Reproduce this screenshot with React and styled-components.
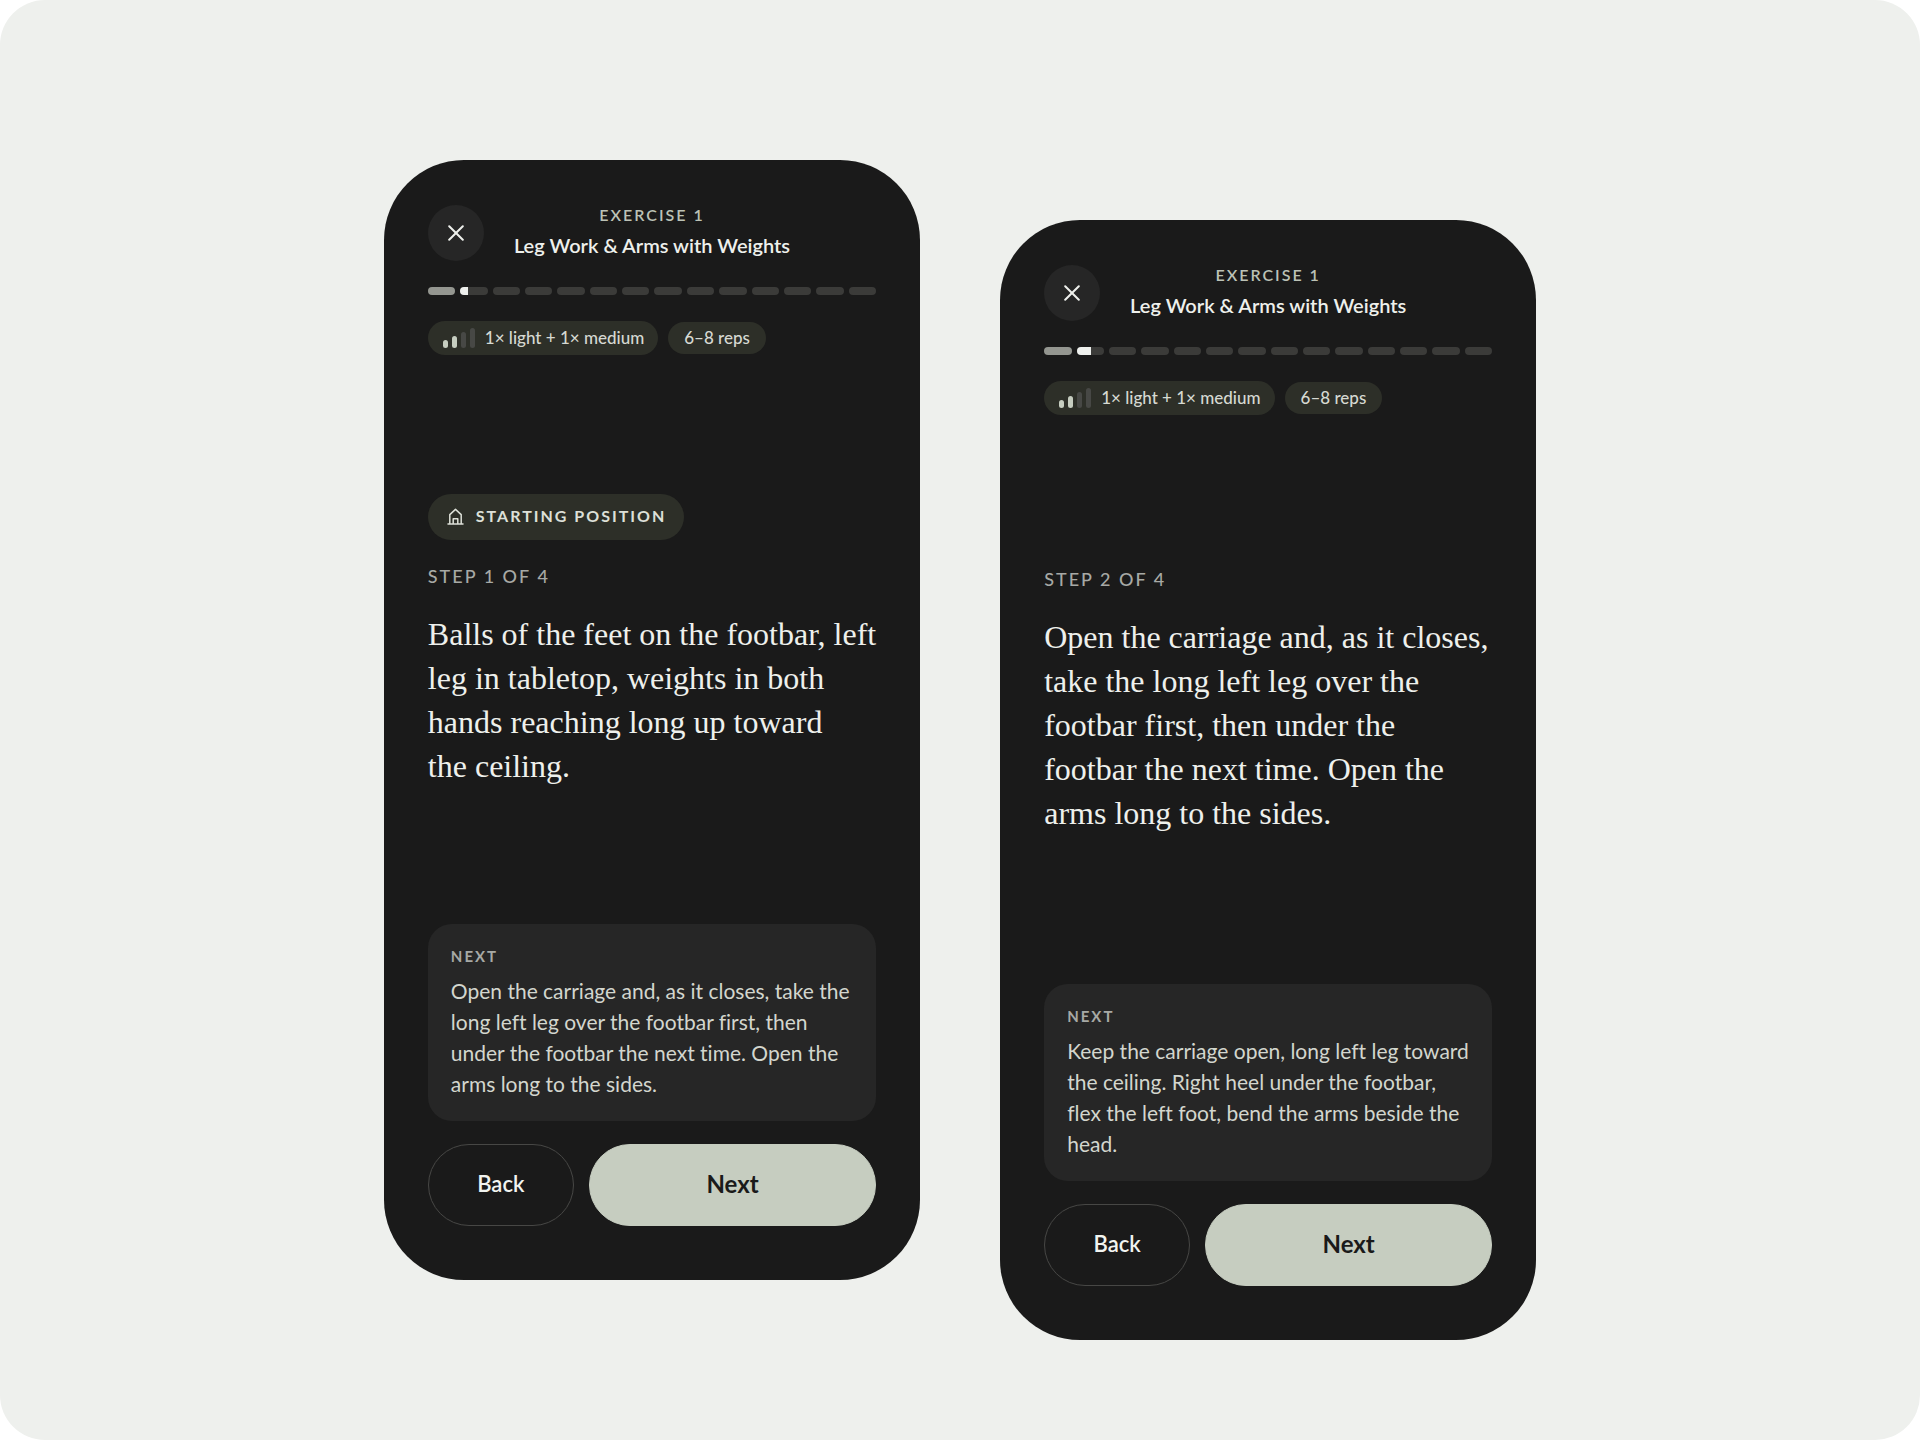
import styled, { createGlobalStyle } from 'styled-components';

const GlobalStyle = createGlobalStyle`
  *,
  *::before,
  *::after {
    box-sizing: border-box;
  }

  body {
    margin: 0;
    background: #ffffff;
    color: #eef0ec;
    font-family: Lato, 'Open Sans', sans-serif;
    font-variant-ligatures: none;
  }

  button {
    font-family: inherit;
    cursor: pointer;
  }
`;

const Stage = styled.main`
  display: flex;
  justify-content: center;
  align-items: flex-start;
  gap: 80px;
  min-height: 100vh;
  padding: 160px 48px 100px;
  border-radius: 45px;
  background: #eef0ed;
`;

const Phone = styled.section`
  display: flex;
  flex-direction: column;
  flex: 0 1 536px;
  min-height: 1120px;
  margin-top: ${({ $lowered }) => ($lowered ? '60px' : '0')};
  padding: 45px 44px 54px;
  border-radius: 80px;
  background: #1a1a1a;
`;

const Header = styled.header`
  display: grid;
  grid-template-columns: 56px 1fr 56px;
  align-items: center;
`;

const CloseButton = styled.button`
  display: flex;
  align-items: center;
  justify-content: center;
  width: 56px;
  height: 56px;
  padding: 0;
  border: none;
  border-radius: 50%;
  background: #262626;
  color: #eef0ec;
`;

const Titles = styled.div`
  padding-bottom: 2px;
  text-align: center;
`;

const Overline = styled.p`
  margin: 0;
  font-size: 16px;
  line-height: 20px;
  font-weight: 600;
  letter-spacing: 2px;
  color: #bcc2b6;
`;

const Title = styled.h1`
  margin: 6px 0 0;
  font-size: 20px;
  line-height: 28px;
  font-weight: 600;
  white-space: nowrap;
`;

const Segments = styled.div`
  display: flex;
  gap: 5px;
  margin-top: 26px;
`;

const Segment = styled.span`
  flex: 1;
  height: 8px;
  border-radius: 4px;
  overflow: hidden;
  background: #3b3b39;
`;

const SegmentFill = styled.span`
  display: block;
  height: 100%;
  background: ${({ $done }) => ($done ? '#949690' : '#eef0ed')};
`;

const Chips = styled.div`
  display: flex;
  align-items: center;
  gap: 10px;
  margin-top: 26px;
`;

const Chip = styled.span`
  display: flex;
  align-items: center;
  gap: 10px;
  padding: ${({ $tall }) => ($tall ? '5px 14px 5px 15px' : '4px 16px')};
  border-radius: 17px;
  background: #2d2f28;
  color: #d6d9d2;
  font-size: 17px;
  line-height: 24px;
  font-weight: 500;
  white-space: nowrap;
`;

const Bars = styled.span`
  display: flex;
  align-items: flex-end;
  gap: 4px;
`;

const Bar = styled.span`
  width: 5px;
  height: ${({ $level }) => 4 + $level * 4}px;
  border-radius: 3px;
  background: ${({ $on }) => ($on ? '#c6cdc0' : '#474845')};
`;

const Step = styled.div`
  display: flex;
  flex: 1;
  flex-direction: column;
  align-items: flex-start;
  justify-content: center;
  padding-top: 3px;
`;

const Badge = styled.span`
  display: flex;
  align-items: center;
  gap: 12px;
  margin-bottom: 24px;
  padding: 10px 18px 12px 19px;
  border-radius: 23px;
  background: #2d2f28;
  color: #dde0d8;
  font-size: 16px;
  line-height: 24px;
  font-weight: 700;
  letter-spacing: 2px;
`;

const StepCount = styled.p`
  margin: 0 0 24px;
  color: #a7a9a5;
  font-size: 18px;
  line-height: 24px;
  font-weight: 500;
  letter-spacing: 2px;
`;

const Instruction = styled.h2`
  margin: 0;
  font-family: 'Liberation Serif', serif;
  font-size: 32px;
  line-height: 44px;
  font-weight: 400;
  font-variant-ligatures: normal;
  white-space: pre;
`;

const NextCard = styled.section`
  padding: 22px 23px;
  border-radius: 24px;
  background: #262626;
`;

const NextLabel = styled.h3`
  margin: 0 0 9px;
  color: #a7a9a5;
  font-size: 15px;
  line-height: 20px;
  font-weight: 700;
  letter-spacing: 2px;
`;

const NextText = styled.p`
  margin: 0;
  color: #d3d6ce;
  font-size: 21px;
  line-height: 31px;
`;

const Actions = styled.div`
  display: grid;
  grid-template-columns: 146px 1fr;
  gap: 15px;
  margin-top: 23px;
`;

const Button = styled.button`
  height: 82px;
  padding: 0 0 3px;
  border: 1px solid ${({ $primary }) => ($primary ? '#c6cdc0' : '#474745')};
  border-radius: 41px;
  background: ${({ $primary }) => ($primary ? '#c6cdc0' : 'transparent')};
  color: ${({ $primary }) => ($primary ? '#1a1a1a' : '#f2f4f0')};
  font-size: ${({ $primary }) => ($primary ? '24px' : '22px')};
  font-weight: ${({ $primary }) => ($primary ? 700 : 600)};
`;

const SEGMENT_COUNT = 14;

const screens = [
  {
    step: 1,
    starting: true,
    progress: 30,
    lines: [
      'Balls of the feet on the footbar, left',
      'leg in tabletop, weights in both',
      'hands reaching long up toward',
      'the ceiling.',
    ],
    next: 'Open the carriage and, as it closes, take the long left leg over the footbar first, then under the footbar the next time. Open the arms long to the sides.',
  },
  {
    step: 2,
    starting: false,
    progress: 53,
    lines: [
      'Open the carriage and, as it closes,',
      'take the long left leg over the',
      'footbar first, then under the',
      'footbar the next time. Open the',
      'arms long to the sides.',
    ],
    next: 'Keep the carriage open, long left leg toward the ceiling. Right heel under the footbar, flex the left foot, bend the arms beside the head.',
  },
];

function CloseIcon() {
  return (
    <svg width="16" height="16" viewBox="0 0 16 16" fill="none" stroke="currentColor" strokeWidth="2" strokeLinecap="round" aria-hidden="true">
      <path d="M1.2 1.2 14.8 14.8M14.8 1.2 1.2 14.8" />
    </svg>
  );
}

function HouseIcon() {
  return (
    <svg width="17" height="17" viewBox="0 0 17 17" fill="none" stroke="currentColor" strokeWidth="1.5" strokeLinecap="round" strokeLinejoin="round" aria-hidden="true">
      <path d="M1 16h15M2.8 16V6.6L8.5 1.4l5.7 5.2V16M6.2 16v-5.2h4.6V16" />
    </svg>
  );
}

function Progress({ current }) {
  const fills = Array.from({ length: SEGMENT_COUNT }, (_, i) => {
    if (i === 0) return 100;
    return i === 1 ? current : 0;
  });

  return (
    <Segments role="progressbar" aria-label="Workout progress" aria-valuemin={0} aria-valuemax={SEGMENT_COUNT} aria-valuenow={1 + current / 100}>
      {fills.map((fill, i) => (
        <Segment key={i}>
          {fill > 0 && <SegmentFill $done={fill === 100} style={{ width: `${fill}%` }} />}
        </Segment>
      ))}
    </Segments>
  );
}

function ExerciseScreen({ screen, lowered }) {
  return (
    <Phone $lowered={lowered}>
      <Header>
        <CloseButton type="button" aria-label="Close">
          <CloseIcon />
        </CloseButton>
        <Titles>
          <Overline>EXERCISE 1</Overline>
          <Title>Leg Work &amp; Arms with Weights</Title>
        </Titles>
      </Header>

      <Progress current={screen.progress} />

      <Chips>
        <Chip $tall>
          <Bars aria-hidden="true">
            {[1, 2, 3, 4].map(level => (
              <Bar key={level} $level={level} $on={level <= 2} />
            ))}
          </Bars>
          1× light + 1× medium
        </Chip>
        <Chip>6–8 reps</Chip>
      </Chips>

      <Step>
        {screen.starting && (
          <Badge>
            <HouseIcon />
            STARTING POSITION
          </Badge>
        )}
        <StepCount>STEP {screen.step} OF 4</StepCount>
        <Instruction>{screen.lines.join('\n')}</Instruction>
      </Step>

      <NextCard>
        <NextLabel>NEXT</NextLabel>
        <NextText>{screen.next}</NextText>
      </NextCard>

      <Actions>
        <Button type="button">Back</Button>
        <Button type="button" $primary>Next</Button>
      </Actions>
    </Phone>
  );
}

export default function App() {
  return (
    <>
      <GlobalStyle />
      <Stage>
        {screens.map((screen, i) => (
          <ExerciseScreen key={screen.step} screen={screen} lowered={i === 1} />
        ))}
      </Stage>
    </>
  );
}
